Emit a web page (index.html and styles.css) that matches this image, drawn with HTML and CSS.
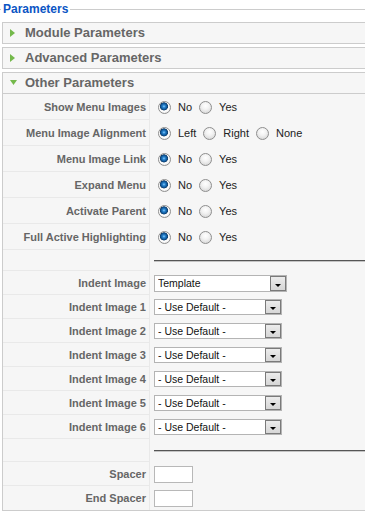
FILE: index.html
```html
<!DOCTYPE html>
<html lang="en">
<head>
  <meta charset="UTF-8" />
  <meta name="viewport" content="width=device-width, initial-scale=1.0"/>
  <title>Parameters</title>
  <link rel="stylesheet" href="styles.css">
</head>
<body>
  <!-- Module parameters block -->
  <fieldset class="adminform">
    <legend>Parameters</legend>
    <div class="pane-sliders">

      <div class="panel">
        <h3 class="toggler">
          <svg class="arrow" width="20" height="16" viewBox="0 0 20 16"><path d="M5 4 L10 8 L5 12 Z" fill="#74b94b"/></svg>Module Parameters
        </h3>
      </div>

      <div class="panel">
        <h3 class="toggler">
          <svg class="arrow" width="20" height="16" viewBox="0 0 20 16"><path d="M5 4 L10 8 L5 12 Z" fill="#74b94b"/></svg>Advanced Parameters
        </h3>
      </div>

      <div class="panel">
        <h3 class="toggler open">
          <svg class="arrow" width="20" height="16" viewBox="0 0 20 16"><path d="M5 5 L12 5 L8.5 10 Z" fill="#74b94b"/></svg>Other Parameters
        </h3>
        <div class="content">

          <div class="param radios">
            <div class="key">Show Menu Images</div>
            <div class="value">
              <input type="radio" name="menu_images" id="mi0" checked><label for="mi0">No</label>
              <input type="radio" name="menu_images" id="mi1"><label for="mi1">Yes</label>
            </div>
          </div>
          <div class="param radios">
            <div class="key">Menu Image Alignment</div>
            <div class="value">
              <input type="radio" name="menu_align" id="ma0" checked><label for="ma0">Left</label>
              <input type="radio" name="menu_align" id="ma1"><label for="ma1">Right</label>
              <input type="radio" name="menu_align" id="ma2"><label for="ma2">None</label>
            </div>
          </div>
          <div class="param radios">
            <div class="key">Menu Image Link</div>
            <div class="value">
              <input type="radio" name="menu_link" id="ml0" checked><label for="ml0">No</label>
              <input type="radio" name="menu_link" id="ml1"><label for="ml1">Yes</label>
            </div>
          </div>
          <div class="param radios">
            <div class="key">Expand Menu</div>
            <div class="value">
              <input type="radio" name="expand" id="ex0" checked><label for="ex0">No</label>
              <input type="radio" name="expand" id="ex1"><label for="ex1">Yes</label>
            </div>
          </div>
          <div class="param radios">
            <div class="key">Activate Parent</div>
            <div class="value">
              <input type="radio" name="activate" id="ap0" checked><label for="ap0">No</label>
              <input type="radio" name="activate" id="ap1"><label for="ap1">Yes</label>
            </div>
          </div>
          <div class="param radios">
            <div class="key">Full Active Highlighting</div>
            <div class="value">
              <input type="radio" name="full_active" id="fa0" checked><label for="fa0">No</label>
              <input type="radio" name="full_active" id="fa1"><label for="fa1">Yes</label>
            </div>
          </div>

          <div class="param spacer first">
            <div class="key"></div>
            <div class="value"><hr></div>
          </div>

          <div class="param selects">
            <div class="key">Indent Image</div>
            <div class="value">
              <span class="select wide">
                <select><option>Template</option></select><span class="drop"></span>
              </span>
            </div>
          </div>
          <div class="param selects">
            <div class="key">Indent Image 1</div>
            <div class="value"><span class="select"><select><option>- Use Default -</option></select><span class="drop"></span></span></div>
          </div>
          <div class="param selects">
            <div class="key">Indent Image 2</div>
            <div class="value"><span class="select"><select><option>- Use Default -</option></select><span class="drop"></span></span></div>
          </div>
          <div class="param selects">
            <div class="key">Indent Image 3</div>
            <div class="value"><span class="select"><select><option>- Use Default -</option></select><span class="drop"></span></span></div>
          </div>
          <div class="param selects">
            <div class="key">Indent Image 4</div>
            <div class="value"><span class="select"><select><option>- Use Default -</option></select><span class="drop"></span></span></div>
          </div>
          <div class="param selects">
            <div class="key">Indent Image 5</div>
            <div class="value"><span class="select"><select><option>- Use Default -</option></select><span class="drop"></span></span></div>
          </div>
          <div class="param selects">
            <div class="key">Indent Image 6</div>
            <div class="value"><span class="select"><select><option>- Use Default -</option></select><span class="drop"></span></span></div>
          </div>

          <div class="param spacer second">
            <div class="key"></div>
            <div class="value"><hr></div>
          </div>

          <div class="param texts">
            <div class="key">Spacer</div>
            <div class="value"><input type="text" class="text_area"></div>
          </div>
          <div class="param texts last">
            <div class="key">End Spacer</div>
            <div class="value"><input type="text" class="text_area"></div>
          </div>

        </div>
      </div>

    </div>
  </fieldset>
</body>
</html>
```

FILE: styles.css
```css
* { margin: 0; padding: 0; box-sizing: border-box; }
html, body { overflow: hidden; }
body {
  font-family: "Liberation Sans", Arial, sans-serif;
  font-size: 11px;
  background-color: #fff;
  color: #222;
  width: 365px;
}
/* Fieldset bilan legend */
.adminform {
  width: 390px;
  border: none;
  border-top: 1px solid #ccc;
  margin-top: 2px;
}
.adminform legend {
  margin-left: 1px;
  padding: 0 2px;
  color: #0b55c4;
  font-size: 12px;
  font-weight: bold;
  line-height: 14px;
}
.pane-sliders {
  padding-top: 6px;
}
.panel {
  border: 1px solid #ccc;
  margin: 0 0 3px 2px;
}
.panel h3 {
  margin: 0;
  padding: 2px;
  height: 20px;
  line-height: 16px;
  background-color: #f6f6f6;
  color: #666;
  font-size: 13px;
  font-weight: bold;
  display: flex;
  align-items: center;
}
.panel h3.open {
  height: 21px;
  border-bottom: 1px solid #ccc;
}
.arrow {
  flex: none;
}
.content {
  background-color: #f6f6f6;
}
/* Parametr qatorlari */
.param {
  display: flex;
}
.key {
  flex: none;
  width: 147px;
  padding-right: 3px;
  border-right: 1px solid #e9e9e9;
  border-bottom: 1px solid #e9e9e9;
  display: flex;
  align-items: center;
  justify-content: flex-end;
  color: #666;
  font-weight: bold;
  white-space: nowrap;
}
.value {
  flex: 1;
  display: flex;
  align-items: center;
  padding-left: 4px;
  white-space: nowrap;
}
.radios { height: 26px; }
.spacer.first { height: 21px; }
.spacer.second { height: 23px; }
.selects { height: 24px; }
.texts { height: 24px; }
.texts.last .key { border-bottom: none; }

hr {
  width: 100%;
  border: none;
  border-top: 1px solid #555;
  border-bottom: 1px solid #c4c4c4;
  margin-top: 1px;
}
/* Radio tugmalar */
input[type="radio"] {
  appearance: none;
  -webkit-appearance: none;
  flex: none;
  width: 13px;
  height: 13px;
  margin: 0 7px 0 4px;
  border: 1px solid #8e8e8e;
  border-radius: 50%;
  background: radial-gradient(circle at 50% 35%, #fff 0, #f2f2f2 40%, #cfcfcf 100%);
}
input[type="radio"] + label + input[type="radio"] {
  margin-left: 0;
}
input[type="radio"]:checked {
  background: radial-gradient(circle at 45% 40%, #8fd0ff 0, #2a86d1 1.3px, #0d5597 3px, #143f6a 3.8px, #f4f4f4 4.3px, #fff 5px, #d2d2d2 100%);
}
.value label {
  margin-right: 7px;
  color: #222;
}
/* Ochiluvchi ro'yxat */
.select {
  position: relative;
  display: inline-block;
  width: 128px;
  height: 16px;
}
.select.wide {
  width: 133px;
  height: 17px;
}
.select select {
  appearance: none;
  -webkit-appearance: none;
  width: 100%;
  height: 100%;
  border: 1px solid #b4b4b4;
  border-radius: 0;
  background-color: #fff;
  font-family: "Liberation Sans", Arial, sans-serif;
  font-size: 10.5px;
  color: #111;
  padding: 0 0 0 3px;
  outline: none;
}
.drop {
  position: absolute;
  top: 1px;
  right: 1px;
  width: 16px;
  height: calc(100% - 2px);
  border: 1px solid #7a7a7a;
  background: linear-gradient(#ececec, #d6d6d6);
  pointer-events: none;
}
.drop::after {
  content: "";
  position: absolute;
  left: 4px;
  bottom: 3px;
  border-left: 3px solid transparent;
  border-right: 3px solid transparent;
  border-top: 3px solid #000;
}
.text_area {
  width: 39px;
  height: 17px;
  border: 1px solid #b8b8b8;
  background-color: #fff;
  font-size: 11px;
}
```
